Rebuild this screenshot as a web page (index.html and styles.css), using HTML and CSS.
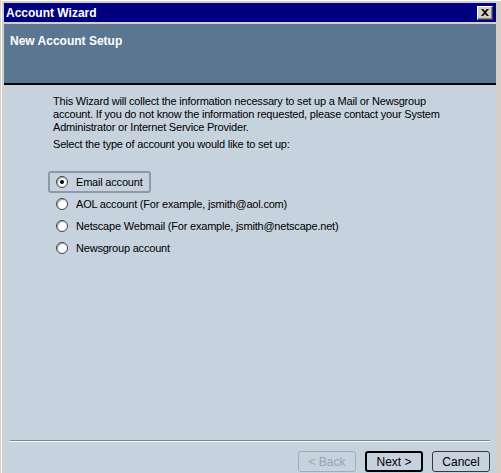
FILE: index.html
```html
<!DOCTYPE html>
<html>
<head>
<meta charset="utf-8">
<link rel="stylesheet" href="styles.css">
</head>
<body>
<div class="window">
  <div class="titlebar">
    <span class="title">Account Wizard</span>
    <span class="close"><svg width="8" height="7" viewBox="0 0 8 7"><path d="M0 0h2l2 2 2-2h2L5 3.5 8 7H6L4 5 2 7H0l3-3.5z" fill="#000"/></svg></span>
  </div>
  <div class="header">New Account Setup</div>
  <div class="content">
    <p class="intro">This Wizard will collect the information necessary to set up a Mail or Newsgroup account. If you do not know the information requested, please contact your System Administrator or Internet Service Provider.</p>
    <p class="prompt">Select the type of account you would like to set up:</p>
    <div class="options">
      <div class="option focused"><span class="radio checked"></span><span>Email account</span></div>
      <div class="option"><span class="radio"></span><span>AOL account (For example, jsmith@aol.com)</span></div>
      <div class="option"><span class="radio"></span><span>Netscape Webmail (For example, jsmith@netscape.net)</span></div>
      <div class="option"><span class="radio"></span><span>Newsgroup account</span></div>
    </div>
    <div class="spacer"></div>
    <div class="separator"></div>
    <div class="buttons">
      <button class="btn disabled">&lt; Back</button>
      <button class="btn default">Next &gt;</button>
      <button class="btn">Cancel</button>
    </div>
  </div>
</div>
</body>
</html>
```
FILE: styles.css
```css
* { box-sizing: border-box; }
html, body { margin: 0; padding: 0; }
body {
  width: 501px;
  height: 473px;
  overflow: hidden;
  font-family: "Liberation Sans", Arial, sans-serif;
  font-size: 11px;
  color: #000;
}
.window {
  width: 501px;
  height: 473px;
  background: #d4d0c8;
  border-left: 1px solid #d4d0c8;
  padding: 3px 5px 0 3px;
  box-shadow: inset 1px 1px 0 #fff;
  display: flex;
  flex-direction: column;
}
.titlebar {
  height: 19px;
  background: #000080;
  color: #fff;
  display: flex;
  align-items: center;
  justify-content: space-between;
  padding: 0 3px 0 2px;
}
.title {
  font-weight: bold;
  font-size: 12px;
}
.close {
  width: 16px;
  height: 14px;
  background: #d4d0c8;
  border: 1px solid;
  border-color: #fff #404040 #404040 #fff;
  box-shadow: inset -1px -1px 0 #808080;
  display: flex;
  align-items: center;
  justify-content: center;
}
.header {
  margin-top: 2px;
  height: 61px;
  background: #5b7691;
  color: #fff;
  font-weight: bold;
  font-size: 12px;
  padding: 10px 6px;
  border-bottom: 2px solid #000;
}
.content {
  flex: 1;
  background: #c6d2de;
  display: flex;
  flex-direction: column;
  padding: 10px 0 0 0;
  letter-spacing: -0.2px;
  line-height: 13px;
}
.intro {
  margin: 0 0 0 49px;
  width: 392px;
}
.prompt {
  margin: 4px 0 0 49px;
}
.options {
  margin: 20px 0 0 44px;
  display: flex;
  flex-direction: column;
}
.option {
  display: flex;
  align-items: center;
  gap: 8px;
  height: 22px;
  padding: 0 6px 0 6px;
  align-self: flex-start;
  border: 2px solid transparent;
  border-radius: 3px;
}
.option.focused {
  border-color: #8c99a6;
}
.radio {
  width: 12px;
  height: 12px;
  border-radius: 50%;
  background: #fff;
  border: 1px solid #404040;
  box-shadow: inset 1px 1px 1px #9aa;
  position: relative;
}
.radio.checked::after {
  content: "";
  position: absolute;
  left: 3px;
  top: 3px;
  width: 4px;
  height: 4px;
  border-radius: 50%;
  background: #000;
}
.spacer { flex: 1; }
.separator {
  margin: 0 6px 0 6px;
  height: 2px;
  border-top: 1px solid #7a8896;
  border-bottom: 1px solid #fff;
}
.buttons {
  display: flex;
  justify-content: flex-end;
  gap: 9px;
  padding: 9px 6px 1px 0;
  letter-spacing: 0;
}
.btn {
  width: 58px;
  height: 21px;
  font-family: "Liberation Sans", Arial, sans-serif;
  font-size: 12px;
  background: #c6d2de;
  border: 1px solid #3a3a3a;
  border-radius: 3px;
  color: #000;
  padding: 0;
}
.btn.default {
  border: 2px solid #000;
}
.btn.disabled {
  color: #98a6b4;
  border-color: #a0acb8;
}
```
